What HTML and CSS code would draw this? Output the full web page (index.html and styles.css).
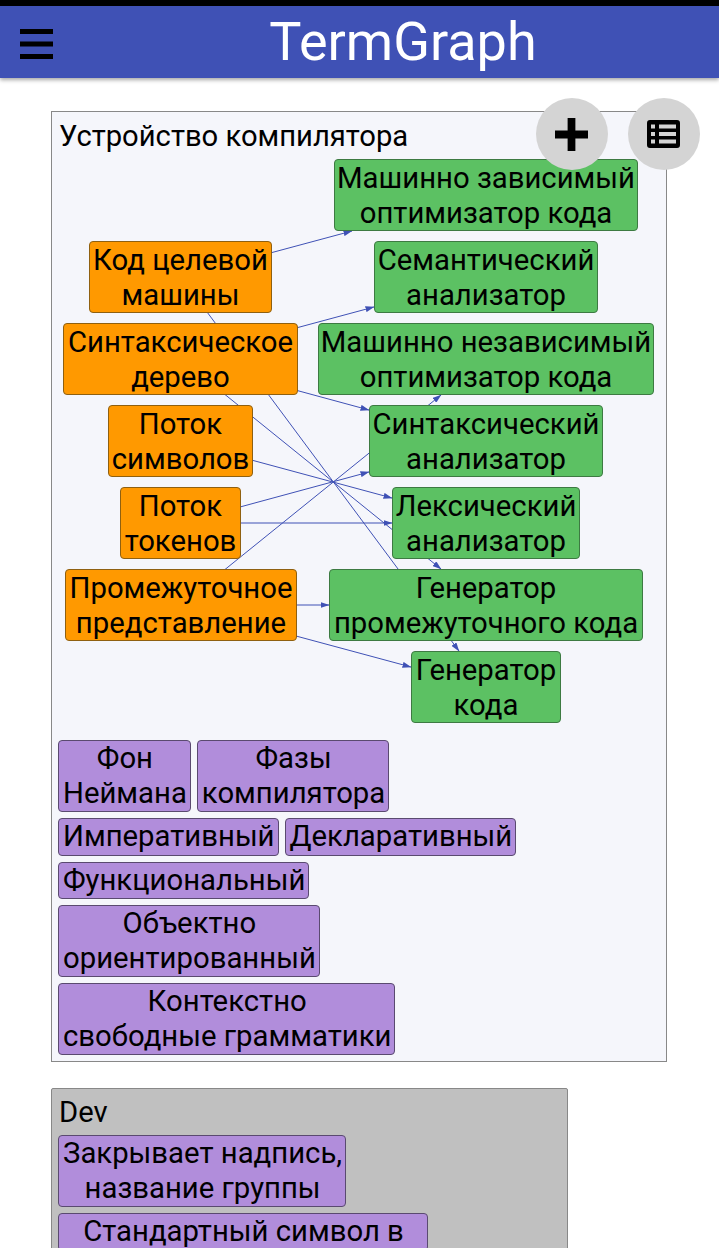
FILE: index.html
```html
<!DOCTYPE html>
<html lang="ru">
<head>
    <meta name="viewport" content="width=device-width, initial-scale=1">
    <title>TermGraph</title>
    <link rel="stylesheet" href="styles.css">
</head>
<body>
    <div class="statusbar"></div>
    <header class="topbar">
        <svg class="menu-icon" viewBox="0 0 33 30" aria-hidden="true">
            <rect x="0" y="0" width="33" height="5"></rect>
            <rect x="0" y="12.5" width="33" height="5"></rect>
            <rect x="0" y="25" width="33" height="5"></rect>
        </svg>
        <h1>TermGraph</h1>
    </header>

    <main class="content">
        <button class="fab fab-add">
            <svg viewBox="0 0 34 34" aria-hidden="true">
                <path d="M13 0h8v13h13v8H21v13h-8V21H0v-8h13z"></path>
            </svg>
        </button>
        <button class="fab fab-list">
            <svg viewBox="0 0 33 28" aria-hidden="true">
                <path fill-rule="evenodd" d="M3 0h27a3 3 0 0 1 3 3v22a3 3 0 0 1-3 3H3a3 3 0 0 1-3-3V3a3 3 0 0 1 3-3zM4 4.500v4h4v-4zm8 0v4h17v-4zM4 12v4h4v-4zm8 0v4h17v-4zM4 19.500v4h4v-4zm8 0v4h17v-4z"></path>
            </svg>
        </button>

        <section class="group group-main">
            <div class="group-title">Устройство компилятора</div>
            <div class="graph">
                <svg class="edges" viewBox="0 0 616 640" aria-hidden="true">
                    <defs>
                        <marker id="arrow" markerWidth="9" markerHeight="6" refX="8.5" refY="3" orient="auto" markerUnits="userSpaceOnUse">
                            <path d="M0 0L9 3L0 6z" fill="#3f51b5"></path>
                        </marker>
                    </defs>
                    <!-- координаты от левого верхнего угла графа (52, 159) -->
                    <line x1="129" y1="118" x2="300" y2="72"></line>
                    <line x1="129" y1="118" x2="407" y2="492"></line>
                    <line x1="129" y1="200" x2="322" y2="148"></line>
                    <line x1="129" y1="200" x2="317" y2="251"></line>
                    <line x1="129" y1="200" x2="389" y2="410"></line>
                    <line x1="129" y1="282" x2="340" y2="339"></line>
                    <line x1="129" y1="364" x2="317" y2="313"></line>
                    <line x1="129" y1="364" x2="340" y2="364"></line>
                    <line x1="129" y1="446" x2="389" y2="236"></line>
                    <line x1="129" y1="446" x2="277" y2="446"></line>
                    <line x1="129" y1="446" x2="359" y2="508"></line>
                </svg>

                <div class="node node-green n-machine-dep">Машинно зависимый<br>оптимизатор кода</div>
                <div class="node node-orange n-target">Код целевой<br>машины</div>
                <div class="node node-green n-semantic">Семантический<br>анализатор</div>
                <div class="node node-orange n-tree">Синтаксическое<br>дерево</div>
                <div class="node node-green n-machine-indep">Машинно независимый<br>оптимизатор кода</div>
                <div class="node node-orange n-chars">Поток<br>символов</div>
                <div class="node node-green n-syntax">Синтаксический<br>анализатор</div>
                <div class="node node-orange n-tokens">Поток<br>токенов</div>
                <div class="node node-green n-lexer">Лексический<br>анализатор</div>
                <div class="node node-orange n-ir">Промежуточное<br>представление</div>
                <div class="node node-green n-ir-gen">Генератор<br>промежуточного кода</div>
                <div class="node node-green n-codegen">Генератор<br>кода</div>
            </div>
            <div class="tags">
                <div class="tag">Фон<br>Неймана</div>
                <div class="tag">Фазы<br>компилятора</div>
                <div class="tag">Императивный</div>
                <div class="tag">Декларативный</div>
                <div class="tag">Функциональный</div>
                <div class="tag">Объектно<br>ориентированный</div>
                <div class="tag">Контекстно<br>свободные грамматики</div>
            </div>
        </section>

        <section class="group group-dev">
            <div class="group-title">Dev</div>
            <div class="tags">
                <div class="tag">Закрывает надпись,<br>название группы</div>
                <div class="tag tag-wide">Стандартный символ в</div>
            </div>
        </section>
    </main>
</body>
</html>
```

FILE: styles.css
```css
html, body {
    margin: 0;
    height: 100%;
    overflow: hidden;
}
body {
    font-family: Roboto, sans-serif;
    background-color: #fff;
    color: #000;
}
.statusbar {
    height: 6px;
    background-color: #000;
}
.topbar {
    height: 72px;
    background-color: #3f51b5;
    box-shadow: 0 2px 4px rgba(0, 0, 0, 0.35);
    display: flex;
    align-items: center;
    justify-content: center;
    position: relative;
}
.topbar h1 {
    margin: 0 0 0 -9px;
    padding-left: 96px;
    font-size: 54px;
    font-weight: 400;
    color: #fff;
    line-height: 72px;
}
.menu-icon {
    position: absolute;
    left: 20px;
    top: 23px;
    width: 33px;
    height: 30px;
    fill: #000;
}
.content {
    position: relative;
    padding: 33px 52px 0 51px;
}
.fab {
    position: absolute;
    top: 20px;
    width: 72px;
    height: 72px;
    padding: 0;
    border: none;
    border-radius: 50%;
    background-color: #d4d4d4;
    display: flex;
    align-items: center;
    justify-content: center;
    z-index: 2;
}
.fab svg {
    margin-right: 1px;
}
.fab-add {
    left: 536px;
}
.fab-add svg {
    width: 33px;
    height: 33px;
}
.fab-list {
    left: 628px;
}
.fab-list svg {
    width: 33px;
    height: 28px;
}
.group {
    background-color: #f5f6fb;
    border: 1px solid #888;
    padding: 6px;
    margin-bottom: 26px;
}
.group-main {
    padding-bottom: 6px;
}
.group-title {
    font-size: 29.2px;
    line-height: 35px;
    padding-left: 1px;
    margin-top: 1px;
}
.group-dev {
    background-color: #c0c0c0;
    width: 503px;
    border-radius: 2px;
    padding-top: 5px;
}
.group-dev .tags {
    margin-top: 5px;
    flex-direction: column;
    align-items: flex-start;
}
.graph {
    position: relative;
    height: 572px;
    margin: 5px -6px 9px;
}
.edges {
    position: absolute;
    left: 0;
    top: 0;
    width: 616px;
    height: 640px;
    overflow: visible;
}
.edges line {
    stroke: #3f51b5;
    stroke-width: 1;
    marker-end: url(#arrow);
}
.node {
    position: absolute;
    box-sizing: border-box;
    height: 72px;
    padding: 1px 0;
    border: 1px solid #4a4a4a;
    border-radius: 4px;
    font-size: 29.3px;
    line-height: 35px;
    text-align: center;
    white-space: nowrap;
}
.node-green {
    background-color: #5cc163;
    border-color: #3d7a42;
}
.node-orange {
    background-color: #ff9900;
    border-color: #8f6010;
}
.n-machine-dep { left: 282px; top: 0; width: 304px; }
.n-target { left: 37px; top: 82px; width: 183px; }
.n-semantic { left: 322px; top: 82px; width: 224px; }
.n-tree { left: 11px; top: 164px; width: 235px; }
.n-machine-indep { left: 266px; top: 164px; width: 336px; }
.n-chars { left: 56px; top: 246px; width: 145px; }
.n-syntax { left: 317px; top: 246px; width: 234px; }
.n-tokens { left: 68px; top: 328px; width: 121px; }
.n-lexer { left: 340px; top: 328px; width: 188px; }
.n-ir { left: 13px; top: 410px; width: 232px; }
.n-ir-gen { left: 277px; top: 410px; width: 314px; }
.n-codegen { left: 359px; top: 492px; width: 150px; }
.tags {
    display: flex;
    flex-wrap: wrap;
    gap: 6px;
    max-width: 470px;
}
.tag {
    box-sizing: border-box;
    min-height: 37.5px;
    padding: 0 3px 0 4px;
    background-color: #b18ddb;
    border: 1px solid #5a4a70;
    border-radius: 4px;
    font-size: 29.3px;
    line-height: 35px;
    text-align: center;
    white-space: nowrap;
}
.tag-wide {
    width: 370px;
}
```
